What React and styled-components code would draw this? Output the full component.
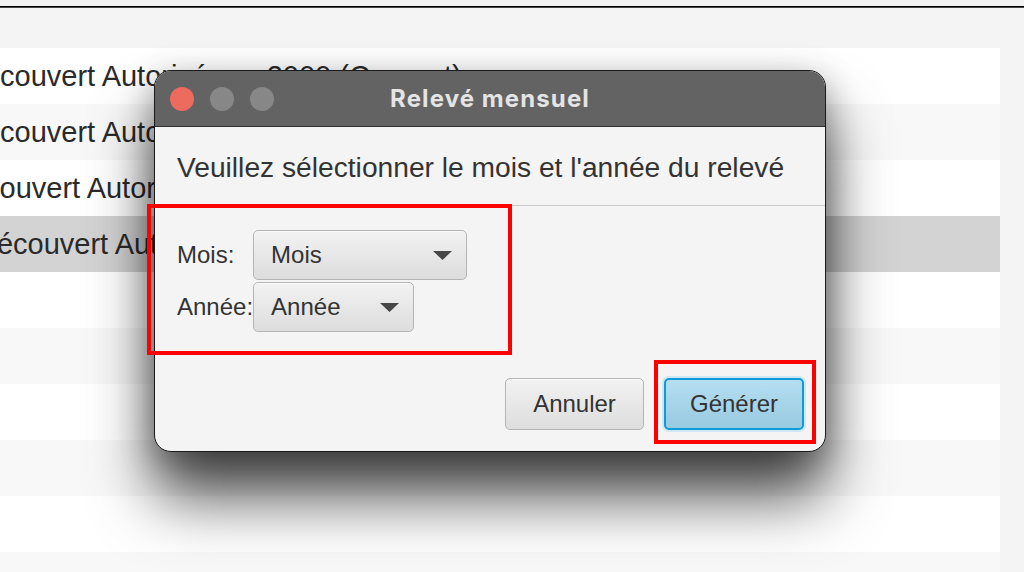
import React from "react";
import styled, { createGlobalStyle } from "styled-components";

const GlobalStyle = createGlobalStyle`
  html, body { margin: 0; padding: 0; background: #f4f4f4; }
  body { font-family: "Liberation Sans", Arial, sans-serif; }
`;

const Page = styled.div`
  position: relative;
  width: 1024px;
  height: 572px;
  overflow: hidden;
  background: #f4f4f4;
  display: flex;
  flex-direction: column;
  & > * { flex: none; }
`;

const TopStrip = styled.div`
  height: 6px;
  background: #f2f2f2;
`;

const Rule = styled.div`
  height: 1px;
  background: #000;
  border-bottom: 1px solid #444;
`;

const Gap = styled.div`
  height: 40px;
`;

const List = styled.div`
  width: 1000px;
  display: flex;
  flex-direction: column;
`;

const Row = styled.div`
  height: 56px;
  flex: none;
  display: flex;
  align-items: center;
  overflow: hidden;
  white-space: nowrap;
  font-size: 29px;
  color: #2a2a2a;
  background: ${(p) => (p.$selected ? "#d3d3d3" : p.$odd ? "#f8f8f8" : "#ffffff")};
`;

const RowLabel = styled.span`
  margin-left: ${(p) => p.$shift}px;
`;

const RowAmount = styled.span`
  margin-left: 49px;
`;

const Dialog = styled.div`
  position: absolute;
  left: 154px;
  top: 70px;
  width: 672px;
  height: 382px;
  box-sizing: border-box;
  border: 1px solid #1a1a1a;
  border-radius: 17px;
  overflow: hidden;
  background: #f4f4f4;
  display: flex;
  flex-direction: column;
  box-shadow: 0 46px 62px rgba(0, 0, 0, 0.68), 0 10px 34px rgba(0, 0, 0, 0.32);
`;

const TitleBar = styled.div`
  height: 55px;
  flex: none;
  background: #636363;
  border-bottom: 1px solid #2e2e2e;
  display: grid;
  grid-template-columns: 1fr auto 1fr;
  align-items: center;
  padding: 0 15px;
`;

const Lights = styled.div`
  display: flex;
  gap: 16px;
`;

const Light = styled.span`
  width: 24px;
  height: 24px;
  border-radius: 50%;
  background: ${(p) => (p.$close ? "#ed6a5e" : "#878787")};
`;

const Title = styled.div`
  font-family: Inter, "Liberation Sans", sans-serif;
  font-weight: 700;
  font-size: 24px;
  letter-spacing: 1.1px;
  color: #e4e4e4;
  text-align: center;
`;

const Header = styled.div`
  height: 79px;
  flex: none;
  box-sizing: border-box;
  border-bottom: 1px solid #c9c9c9;
  display: flex;
  align-items: center;
  padding: 3px 0 0 22px;
  font-size: 28.2px;
  color: #333;
`;

const Form = styled.div`
  display: grid;
  grid-template-columns: auto auto;
  justify-content: start;
  align-items: center;
  row-gap: 2px;
  padding: 24px 0 0 22px;
`;

const Label = styled.div`
  font-size: 24px;
  color: #333;
`;

const Combo = styled.div`
  width: ${(p) => p.$w}px;
  height: 50px;
  box-sizing: border-box;
  border: 1px solid #b4b4b4;
  border-radius: 5px;
  background: linear-gradient(#f2f2f2, #dddddd);
  box-shadow: inset 0 1px 0 #fafafa;
  display: flex;
  align-items: center;
  justify-content: space-between;
  padding: 0 14px 0 17px;
  font-size: 24px;
  color: #333;
`;

const Arrow = styled.svg`
  width: 19px;
  height: 9px;
  flex: none;
`;

const Buttons = styled.div`
  margin-top: auto;
  display: flex;
  justify-content: flex-end;
  gap: 20px;
  padding: 0 21px 21px 0;
`;

const Button = styled.div`
  width: ${(p) => p.$w}px;
  height: 52px;
  box-sizing: border-box;
  border-radius: 5px;
  display: flex;
  align-items: center;
  justify-content: center;
  font-size: 24px;
  color: #333;
  border: ${(p) => (p.$default ? "2px solid #0e9bd8" : "1px solid #b4b4b4")};
  background: ${(p) =>
    p.$default
      ? "linear-gradient(#b6def0, #98cae1)"
      : "linear-gradient(#f2f2f2, #dddddd)"};
  box-shadow: ${(p) =>
    p.$default ? "0 0 0 2px #cde8f4" : "inset 0 1px 0 #fafafa"};
`;

const Mark = styled.div`
  position: absolute;
  left: ${(p) => p.$x}px;
  top: ${(p) => p.$y}px;
  width: ${(p) => p.$w}px;
  height: ${(p) => p.$h}px;
  box-sizing: border-box;
  border: 4px solid #ff0000;
  pointer-events: none;
`;

const rows = [
  { t: "Découvert Autorisé", a: "-2000 (Courant)", s: -37 },
  { t: "Découvert Autorisé", a: "-1500 (Courant)", s: -37 },
  { t: "Découvert Autorisé", a: "-1000 (Courant)", s: -52 },
  { t: "Découvert Autorisé", a: "-500 (Courant)", s: -24, sel: true },
  {},
  {},
  {},
  {},
  {},
  {},
];

function ArrowIcon() {
  return (
    <Arrow viewBox="0 0 19 9">
      <path d="M0 0 H19 L9.5 9 Z" fill="#474747" />
    </Arrow>
  );
}

export default function App() {
  return (
    <>
      <GlobalStyle />
      <Page>
        <TopStrip />
        <Rule />
        <Gap />
        <List>
          {rows.map((r, i) => (
            <Row key={i} $odd={i % 2 === 1} $selected={r.sel}>
              {r.t && <RowLabel $shift={r.s}>{r.t}</RowLabel>}
              {r.a && <RowAmount>{r.a}</RowAmount>}
            </Row>
          ))}
        </List>

        <Dialog>
          <TitleBar>
            <Lights>
              <Light $close />
              <Light />
              <Light />
            </Lights>
            <Title>Relevé mensuel</Title>
            <span />
          </TitleBar>
          <Header>Veuillez sélectionner le mois et l'année du relevé</Header>
          <Form>
            <Label>Mois:</Label>
            <Combo $w={214}>
              <span>Mois</span>
              <ArrowIcon />
            </Combo>
            <Label>Année:</Label>
            <Combo $w={161}>
              <span>Année</span>
              <ArrowIcon />
            </Combo>
          </Form>
          <Buttons>
            <Button $w={139}>Annuler</Button>
            <Button $w={140} $default>
              Générer
            </Button>
          </Buttons>
        </Dialog>

        <Mark $x={147} $y={204} $w={365} $h={151} />
        <Mark $x={654} $y={360} $w={162} $h={84} />
      </Page>
    </>
  );
}
